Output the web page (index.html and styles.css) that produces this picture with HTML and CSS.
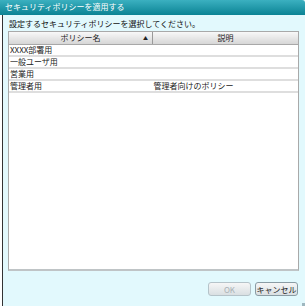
FILE: index.html
```html
<!DOCTYPE html>
<html lang="ja">

<head>
    <meta charset="UTF-8">
    <title>セキュリティポリシーを適用する</title>
    <link rel="stylesheet" href="styles.css">
</head>

<body>
    <div class="dialog">
        <div class="titlebar">セキュリティポリシーを適用する</div>
        <div class="content">
            <p class="prompt">設定するセキュリティポリシーを選択してください。</p>
            <div class="list">
                <table class="policy-table">
                    <thead>
                        <tr>
                            <th class="col-name">ポリシー名<span class="sort">▲</span></th>
                            <th>説明</th>
                        </tr>
                    </thead>
                    <tbody>
                        <tr><td>XXXX部署用</td><td></td></tr>
                        <tr><td>一般ユーザ用</td><td></td></tr>
                        <tr><td>営業用</td><td></td></tr>
                        <tr><td>管理者用</td><td>管理者向けのポリシー</td></tr>
                    </tbody>
                </table>
            </div>
            <div class="buttons">
                <button type="button" class="btn" disabled>OK</button>
                <button type="button" class="btn">キャンセル</button>
            </div>
        </div>
        <div class="grip"></div>
    </div>
</body>

</html>
```

FILE: styles.css
```css
body {
    margin: 0;
    font-family: "Noto Sans CJK JP", sans-serif;
    font-size: 8px;
    background: #ffffff;
}

.dialog {
    position: relative;
    width: 303px;
    height: 306px;
    display: flex;
    flex-direction: column;
    background: #e2f9fd;
    border-left: 1px solid #333;
    margin-left: 2px;
    box-sizing: border-box;
}

.titlebar {
    height: 15px;
    line-height: 14px;
    padding-left: 5px;
    color: #ffffff;
    background: linear-gradient(to bottom, #3bb0c0, #0b8394);
    margin-left: -3px;
    border-top-right-radius: 3px;
}

.content {
    flex: 1;
    display: flex;
    flex-direction: column;
    padding: 0 6px 0 5px;
}

.prompt {
    margin: 3px 0 2px 1px;
    height: 11px;
    line-height: 11px;
    color: #111;
}

.list {
    height: 237px;
    background: #ffffff;
    border: 1px solid #a9a9a9;
    border-bottom: 2px solid #bfc4c6;
}

.policy-table {
    width: 100%;
    border-collapse: collapse;
}

.policy-table th {
    height: 12px;
    padding: 0;
    font-weight: normal;
    line-height: 12px;
    color: #222;
    background: linear-gradient(to bottom, #f8f8f8, #d6d6d6);
    border-right: 1px solid #9a9a9a;
    border-bottom: 1px solid #a8a8a8;
    text-align: center;
}

.policy-table th:last-child {
    border-right: none;
}

.col-name {
    width: 143px;
    position: relative;
}

.sort {
    position: absolute;
    right: 4px;
    top: 0;
    font-size: 5px;
    line-height: 12px;
}

.policy-table td {
    height: 10px;
    padding: 0 0 0 1px;
    line-height: 10px;
    color: #222;
    border-bottom: 2px solid #dedede;
    white-space: nowrap;
}

.buttons {
    display: flex;
    justify-content: flex-end;
    gap: 4px;
    margin-top: 11px;
    padding-right: 1px;
}

.btn {
    width: 43px;
    height: 14px;
    padding: 0;
    font-family: inherit;
    font-size: 8px;
    color: #222;
    border: 1px solid #8a9ca4;
    border-radius: 3px;
    background: linear-gradient(to bottom, #f6f6f6, #d9dfe2);
}

.btn:disabled {
    color: #a8b0b4;
    border-color: #b5c3c9;
}

.grip {
    position: absolute;
    right: 0;
    bottom: 0;
    width: 3px;
    height: 3px;
    background: #9fb7bf;
}
```
